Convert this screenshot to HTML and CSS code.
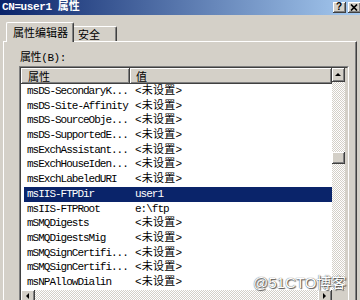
FILE: index.html
```html
<!DOCTYPE html>
<html lang="zh-CN">
<head>
    <meta charset="UTF-8">
    <title>CN=user1 属性</title>
    <link rel="stylesheet" href="styles.css">
</head>
<body>
    <div class="window">
        <div class="titlebar">
            <span class="title">CN=user1 <span class="cjk">属性</span></span>
            <div class="caption-buttons">
                <span class="cap-btn help">?</span>
                <span class="cap-btn close">
                    <svg width="8" height="7" viewBox="0 0 8 7"><path d="M1 0.5 L7 6.5 M7 0.5 L1 6.5" stroke="#000" stroke-width="1.7"/></svg>
                </span>
            </div>
        </div>

        <div class="tabs">
            <div class="tab active">属性编辑器</div>
            <div class="tab">安全</div>
        </div>

        <div class="panel">
            <div class="field-label">属性(B):</div>
            <div class="listview">
                <div class="lv-inner">
                    <div class="lv-main">
                        <div class="lv-table">
                            <div class="lv-header">
                                <div class="hcell col-name">属性</div>
                                <div class="hcell col-value">值</div>
                            </div>
                            <div class="lv-row"><span class="c-name">msDS-SecondaryK...</span><span class="c-value"><span class="unset">&lt;未设置&gt;</span></span></div>
                            <div class="lv-row"><span class="c-name">msDS-Site-Affinity</span><span class="c-value"><span class="unset">&lt;未设置&gt;</span></span></div>
                            <div class="lv-row"><span class="c-name">msDS-SourceObje...</span><span class="c-value"><span class="unset">&lt;未设置&gt;</span></span></div>
                            <div class="lv-row"><span class="c-name">msDS-SupportedE...</span><span class="c-value"><span class="unset">&lt;未设置&gt;</span></span></div>
                            <div class="lv-row"><span class="c-name">msExchAssistant...</span><span class="c-value"><span class="unset">&lt;未设置&gt;</span></span></div>
                            <div class="lv-row"><span class="c-name">msExchHouseIden...</span><span class="c-value"><span class="unset">&lt;未设置&gt;</span></span></div>
                            <div class="lv-row"><span class="c-name">msExchLabeledURI</span><span class="c-value"><span class="unset">&lt;未设置&gt;</span></span></div>
                            <div class="lv-row selected"><span class="c-name">msIIS-FTPDir</span><span class="c-value latin">user1</span></div>
                            <div class="lv-row"><span class="c-name">msIIS-FTPRoot</span><span class="c-value latin">e:\ftp</span></div>
                            <div class="lv-row"><span class="c-name">mSMQDigests</span><span class="c-value"><span class="unset">&lt;未设置&gt;</span></span></div>
                            <div class="lv-row"><span class="c-name">mSMQDigestsMig</span><span class="c-value"><span class="unset">&lt;未设置&gt;</span></span></div>
                            <div class="lv-row"><span class="c-name">mSMQSignCertifi...</span><span class="c-value"><span class="unset">&lt;未设置&gt;</span></span></div>
                            <div class="lv-row"><span class="c-name">mSMQSignCertifi...</span><span class="c-value"><span class="unset">&lt;未设置&gt;</span></span></div>
                            <div class="lv-row"><span class="c-name">msNPAllowDialin</span><span class="c-value"><span class="unset">&lt;未设置&gt;</span></span></div>
                        </div>
                        <div class="vscroll">
                            <div class="sb-btn"><span class="arrow up"></span></div>
                            <div class="sb-track">
                                <div class="sb-thumb"></div>
                            </div>
                        </div>
                    </div>
                    <div class="hscroll">
                        <div class="sb-btn"><span class="arrow left"></span></div>
                        <div class="sb-track"></div>
                        <div class="sb-btn"><span class="arrow right"></span></div>
                        <div class="sb-corner"></div>
                    </div>
                </div>
            </div>
        </div>

        <div class="watermark">@51CTO博客</div>
    </div>
</body>
</html>
```

FILE: styles.css
```css
* {
    margin: 0;
    padding: 0;
    box-sizing: border-box;
}

body {
    background: #d4d0c8;
    font-family: "Liberation Mono", "Noto Sans CJK SC", monospace;
    font-size: 11px;
    color: #000;
    overflow: hidden;
}

.window {
    position: relative;
    width: 360px;
    height: 300px;
    overflow: hidden;
}

/* title bar */
.titlebar {
    height: 15px;
    display: flex;
    align-items: center;
    justify-content: space-between;
    padding-left: 2px;
    background: linear-gradient(to right, #0a246a, #a6caf0);
}

.title {
    color: #fff;
    font-weight: bold;
    font-size: 11px;
    letter-spacing: -0.4px;
    line-height: 15px;
    white-space: nowrap;
}

.title .cjk {
    letter-spacing: 0;
}

.caption-buttons {
    display: flex;
    gap: 2px;
    margin-right: -1px;
}

.cap-btn {
    width: 13px;
    height: 11px;
    display: flex;
    align-items: center;
    justify-content: center;
    background: #d4d0c8;
    border-right: 1px solid #404040;
    border-bottom: 1px solid #404040;
    box-shadow: inset 1px 1px #fff, inset -1px -1px #808080;
    font-family: "Liberation Sans", sans-serif;
    font-weight: bold;
    font-size: 10px;
    line-height: 10px;
}

/* tabs */
.tabs {
    height: 26px;
    display: flex;
    align-items: flex-end;
    padding-left: 6px;
}

.tab {
    width: 45px;
    height: 15px;
    display: flex;
    align-items: center;
    padding-left: 5px;
    background: #d4d0c8;
    border-top: 1px solid #fff;
    border-left: 1px solid #fff;
    border-right: 1px solid #404040;
    border-radius: 2px 2px 0 0;
    box-shadow: inset -1px 0 #808080;
    font-family: "Noto Sans CJK SC", sans-serif;
    font-size: 11px;
    white-space: nowrap;
}

.tab.active {
    position: relative;
    z-index: 1;
    width: 68px;
    height: 20px;
    margin-bottom: -1px;
    margin-right: -2px;
    padding-left: 6px;
    padding-bottom: 1px;
}

/* tab page */
.panel {
    margin: 0 3px;
    height: 262px;
    border-top: 1px solid #fff;
    border-left: 1px solid #fff;
    border-right: 1px solid #404040;
    box-shadow: inset -1px 0 #808080;
    padding: 10px 0 0 15px;
}

.field-label {
    height: 12px;
    line-height: 12px;
    padding-left: 1px;
    margin-bottom: 2px;
    letter-spacing: -0.4px;
    white-space: nowrap;
}

/* list view */
.listview {
    width: 330px;
    border: 1px solid;
    border-color: #808080 #fff #fff #808080;
}

.lv-inner {
    border: 1px solid;
    border-color: #404040 #d4d0c8 #d4d0c8 #404040;
}

.lv-main {
    display: flex;
    padding-right: 2px;
    background: #d4d0c8;
}

.lv-table {
    width: 311px;
    background: #fff;
}

.lv-header {
    height: 16px;
    display: flex;
}

.hcell {
    height: 16px;
    display: flex;
    align-items: center;
    background: #d4d0c8;
    border-right: 1px solid #404040;
    border-bottom: 1px solid #404040;
    box-shadow: inset 1px 1px #fff, inset -1px -1px #808080;
    font-family: "Noto Sans CJK SC", sans-serif;
}

.col-name {
    width: 109px;
    padding-left: 7px;
}

.col-value {
    flex: 1;
    padding-left: 6px;
}

.lv-row {
    height: 14.7px;
    line-height: 14.7px;
    display: flex;
    margin-left: 3px;
    white-space: nowrap;
}

.lv-row.selected {
    background: #0a246a;
    color: #fff;
}

.c-name {
    width: 106px;
    padding-left: 3px;
    letter-spacing: -1px;
    overflow: hidden;
}

.c-value {
    padding-left: 5px;
}

.c-value.latin {
    letter-spacing: -1px;
}

.unset {
    letter-spacing: 0.2px;
}

/* scroll bars */
.vscroll {
    width: 13px;
    display: flex;
    flex-direction: column;
}

.sb-btn {
    flex: none;
    width: 13px;
    height: 14px;
    display: flex;
    align-items: center;
    justify-content: center;
    background: #d4d0c8;
    border-right: 1px solid #404040;
    border-bottom: 1px solid #404040;
    box-shadow: inset 1px 1px #fff, inset -1px -1px #808080;
}

.sb-track {
    flex: 1;
    background: repeating-conic-gradient(#fff 0 25%, #d4d0c8 0 50%) 0 0 / 2px 2px;
}

.sb-thumb {
    height: 12px;
    margin-top: 70px;
    background: #d4d0c8;
    border-right: 1px solid #404040;
    border-bottom: 1px solid #404040;
    box-shadow: inset 1px 1px #fff, inset -1px -1px #808080;
}

.hscroll {
    height: 13px;
    display: flex;
}

.hscroll .sb-btn {
    width: 14px;
    height: 13px;
}

.sb-corner {
    width: 15px;
    background: #d4d0c8;
}

.arrow {
    width: 0;
    height: 0;
    border: 3px solid transparent;
}

.arrow.up {
    border-top: none;
    border-bottom-color: #000;
    margin-top: -1px;
}

.arrow.left {
    border-left: none;
    border-right-color: #000;
}

.arrow.right {
    border-right: none;
    border-left-color: #000;
}

/* watermark over the corner */
.watermark {
    position: absolute;
    left: 253px;
    top: 274px;
    font-family: "Liberation Sans", "Noto Sans CJK SC", sans-serif;
    font-size: 15px;
    line-height: 17px;
    color: #fff;
    text-shadow: 0 0 1px #333, 1px 1px 1px #555;
    white-space: nowrap;
}
```
